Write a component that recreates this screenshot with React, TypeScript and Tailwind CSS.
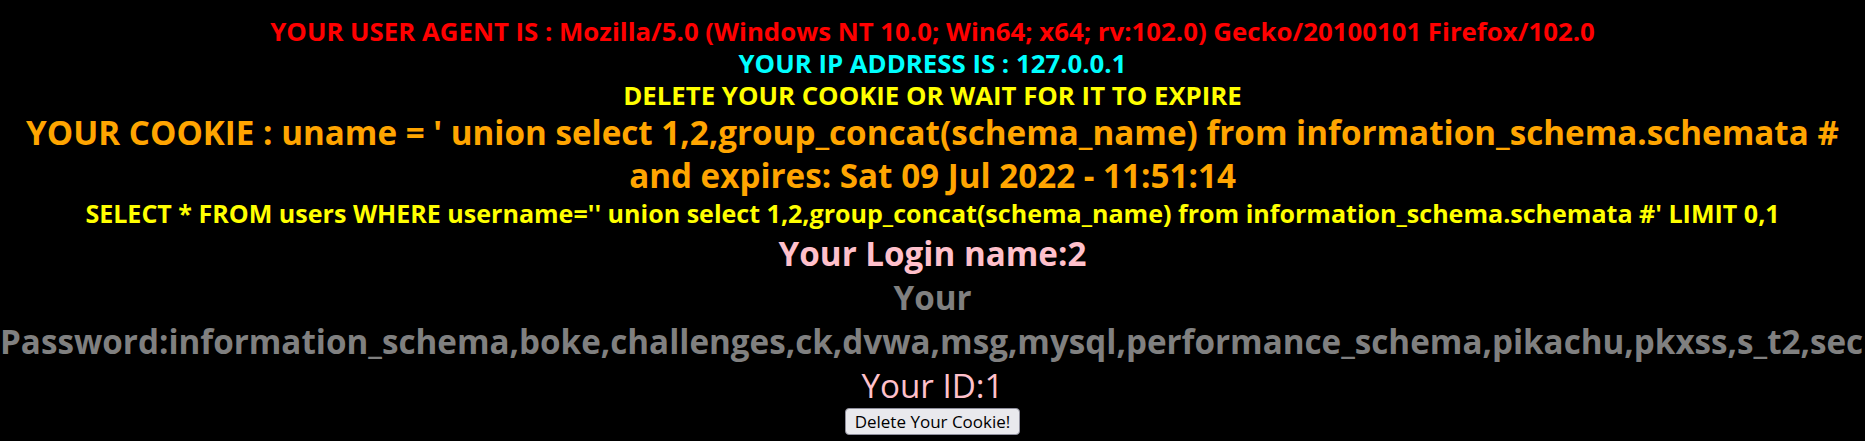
const cookie =
  "' union select 1,2,group_concat(schema_name) from information_schema.schemata #";

const databases =
  "information_schema,boke,challenges,ck,dvwa,msg,mysql,performance_schema,pikachu,pkxss,s_t2,security,sys,test";

export default function App() {
  return (
    <main
      className="min-h-screen w-full overflow-hidden bg-black pt-[15px] text-center"
      style={{ fontFamily: "'Open Sans', 'Noto Sans', sans-serif" }}
    >
      <div className="text-[25.8px] font-bold leading-[32px] text-[#ff0000]">
        YOUR USER AGENT IS : Mozilla/5.0 (Windows NT 10.0; Win64; x64; rv:102.0) Gecko/20100101 Firefox/102.0
      </div>
      <div className="text-[25.8px] font-bold leading-[32px] text-[#00ffff]">
        YOUR IP ADDRESS IS : 127.0.0.1
      </div>
      <div className="text-[25.8px] font-bold leading-[32px] text-[#ffff00]">
        DELETE YOUR COOKIE OR WAIT FOR IT TO EXPIRE
      </div>
      <div className="text-[33.2px] font-bold leading-[43px] text-[#ffa500]">
        YOUR COOKIE : uname = {cookie}
        <br />
        and expires: Sat 09 Jul 2022 - 11:51:14
      </div>
      <div className="text-[25.05px] font-bold leading-[32px] text-[#ffff00]">
        SELECT * FROM users WHERE username='{cookie}' LIMIT 0,1
      </div>

      <div className="mt-[3px] text-[33.2px] leading-[44px]">
        <div className="font-bold text-[#ffc0cb]">Your Login name:2</div>
        <div className="font-bold text-[#808080]">Your Password:{databases}</div>
        <div className="text-[#ffc0cb]">Your ID:1</div>
      </div>

      <button
        type="button"
        className="h-[27px] rounded-[4px] border border-[#8f8f9d] bg-[#e9e9ed] px-[8.5px] text-[17px] leading-[25px] text-black"
      >
        Delete Your Cookie!
      </button>
    </main>
  );
}
